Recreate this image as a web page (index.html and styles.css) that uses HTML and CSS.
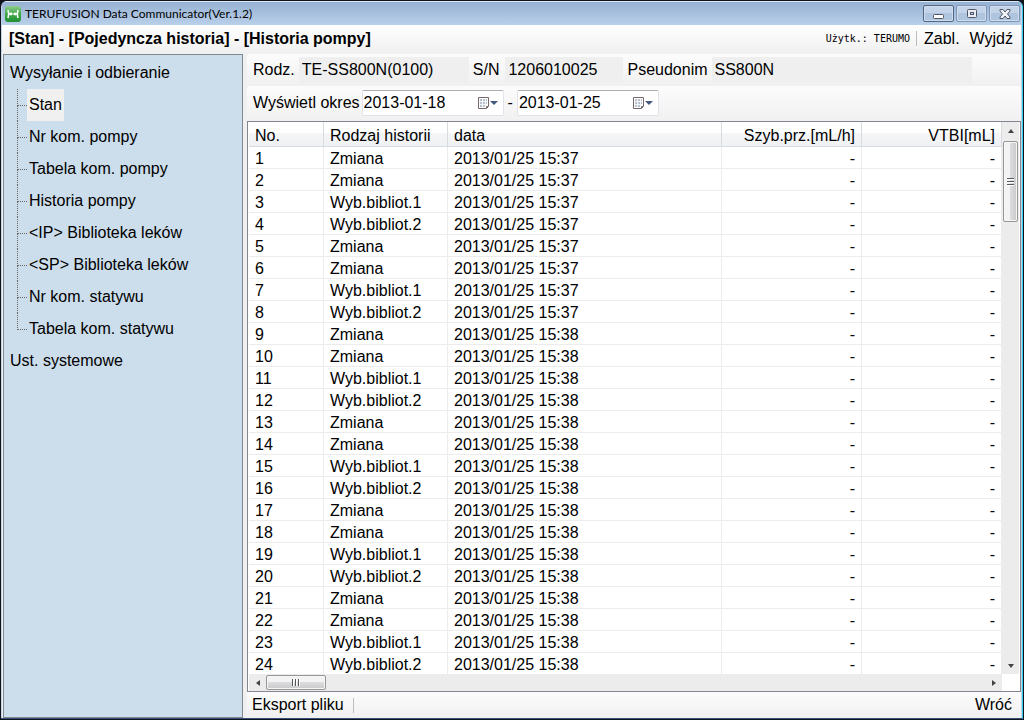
FILE: index.html
```html
<!DOCTYPE html>
<html lang="pl">
<head>
<meta charset="utf-8">
<title>TERUFUSION Data Communicator(Ver.1.2)</title>
<link rel="stylesheet" href="styles.css">
</head>
<body>
<div class="window">
  <header class="titlebar">
    <svg class="app-icon" viewBox="0 0 16 16" aria-hidden="true">
      <defs><linearGradient id="leaf" x1="0" y1="0" x2="0" y2="1"><stop offset="0" stop-color="#8fce8c"/><stop offset=".5" stop-color="#3fa848"/><stop offset="1" stop-color="#1f8f33"/></linearGradient></defs>
      <rect x="0" y="0" width="16" height="16" rx="3" fill="url(#leaf)"/>
      <g fill="none" stroke="#fff"><path d="M3 4Q4.500 8 3 12M13 4Q11.500 8 13 12" stroke-width="1.600"/><path d="M3.500 8H7M9 8H12.500" stroke-width="1.600"/><path d="M7 8H9" stroke-width=".8"/></g>
      <circle cx="6" cy="8" r="1.400" fill="#fff"/><circle cx="10" cy="8" r="1.400" fill="#fff"/>
    </svg>
    <h1 class="title">TERUFUSION Data Communicator(Ver.1.2)</h1>
    <div class="controls">
      <button class="control control-first" aria-label="Minimalizuj"><svg width="12" height="12" viewBox="0 0 12 12"><rect x=".5" y="6.500" width="10" height="4" rx="1" fill="#fff" stroke="#535666"/></svg></button>
      <button class="control" aria-label="Maksymalizuj"><svg width="12" height="12" viewBox="0 0 12 12"><rect x="1.500" y="1.500" width="9" height="8" rx="1" fill="#e9edf3" stroke="#535666"/><rect x="4.500" y="4.500" width="3" height="2" fill="#b9cce2" stroke="#535666"/></svg></button>
      <button class="control" aria-label="Zamknij"><svg width="12" height="12" viewBox="0 0 12 12"><path d="M1 1.500H4L6 4L8 1.500H11V3L8.500 6L11 9V10.500H8L6 8L4 10.500H1V9L3.500 6L1 3Z" fill="#eef1f5" stroke="#535666"/></svg></button>
    </div>
  </header>
  <div class="menubar">
    <h2 class="path">[Stan] - [Pojedyncza historia] - [Historia pompy]</h2>
    <span class="user">Użytk.: TERUMO</span>
    <span class="divider"></span>
    <button class="flat">Zabl.</button>
    <button class="flat">Wyjdź</button>
  </div>
  <div class="workspace">
    <nav class="sidebar">
      <a class="root" href="#odbieranie">Wysyłanie i odbieranie</a>
      <ul class="tree">
        <li><a class="node selected" href="#stan">Stan</a></li>
        <li><a class="node" href="#nr-pompy">Nr kom. pompy</a></li>
        <li><a class="node" href="#tabela-pompy">Tabela kom. pompy</a></li>
        <li><a class="node" href="#historia">Historia pompy</a></li>
        <li><a class="node" href="#ip">&lt;IP&gt; Biblioteka leków</a></li>
        <li><a class="node" href="#sp">&lt;SP&gt; Biblioteka leków</a></li>
        <li><a class="node" href="#nr-statywu">Nr kom. statywu</a></li>
        <li><a class="node" href="#tabela-statywu">Tabela kom. statywu</a></li>
      </ul>
      <a class="root" href="#ustawienia">Ust. systemowe</a>
    </nav>
    <main class="main">
      <div class="bar info">
        <label class="label" for="type">Rodz.</label>
        <input class="field field-type" id="type" value="TE-SS800N(0100)" readonly>
        <label class="label" for="serial">S/N</label>
        <input class="field field-serial" id="serial" value="1206010025" readonly>
        <label class="label" for="alias">Pseudonim</label>
        <input class="field field-alias" id="alias" value="SS800N" readonly>
      </div>
      <div class="bar period">
        <label class="label" for="from">Wyświetl okres</label>
        <div class="date">
          <input class="date-input" id="from" value="2013-01-18">
          <button class="date-button" aria-label="Wybierz datę początkową"><svg width="22" height="14" viewBox="0 0 22 14"><path d="M1.500 1.500H11.500V10.500L9.500 12.500H1.500Z" fill="#fff" stroke="#75686a"/><path d="M3 3H10V9H8V11H3Z" fill="#b9c1cf"/><path d="M3 5.500H10M3 8.500H10M5.500 3V11M8.500 3V10" stroke="#f3f5f8"/><path d="M9.500 12V10.500H11" fill="none" stroke="#75686a"/><path d="M13 5H21L17 9Z" fill="#44597f"/></svg></button>
        </div>
        <span class="dash">-</span>
        <div class="date">
          <input class="date-input" id="to" value="2013-01-25" aria-label="Data końcowa">
          <button class="date-button" aria-label="Wybierz datę końcową"><svg width="22" height="14" viewBox="0 0 22 14"><path d="M1.500 1.500H11.500V10.500L9.500 12.500H1.500Z" fill="#fff" stroke="#75686a"/><path d="M3 3H10V9H8V11H3Z" fill="#b9c1cf"/><path d="M3 5.500H10M3 8.500H10M5.500 3V11M8.500 3V10" stroke="#f3f5f8"/><path d="M9.500 12V10.500H11" fill="none" stroke="#75686a"/><path d="M13 5H21L17 9Z" fill="#44597f"/></svg></button>
        </div>
      </div>
      <section class="list">
        <div class="viewport">
          <table class="history">
            <colgroup><col class="col-no"><col class="col-type"><col><col class="col-value"><col class="col-value"></colgroup>
            <thead><tr><th>No.</th><th>Rodzaj historii</th><th>data</th><th class="num">Szyb.prz.[mL/h]</th><th class="num">VTBI[mL]</th></tr></thead>
            <tbody>
              <tr><td>1</td><td>Zmiana</td><td>2013/01/25 15:37</td><td class="num">-</td><td class="num">-</td></tr>
              <tr><td>2</td><td>Zmiana</td><td>2013/01/25 15:37</td><td class="num">-</td><td class="num">-</td></tr>
              <tr><td>3</td><td>Wyb.bibliot.1</td><td>2013/01/25 15:37</td><td class="num">-</td><td class="num">-</td></tr>
              <tr><td>4</td><td>Wyb.bibliot.2</td><td>2013/01/25 15:37</td><td class="num">-</td><td class="num">-</td></tr>
              <tr><td>5</td><td>Zmiana</td><td>2013/01/25 15:37</td><td class="num">-</td><td class="num">-</td></tr>
              <tr><td>6</td><td>Zmiana</td><td>2013/01/25 15:37</td><td class="num">-</td><td class="num">-</td></tr>
              <tr><td>7</td><td>Wyb.bibliot.1</td><td>2013/01/25 15:37</td><td class="num">-</td><td class="num">-</td></tr>
              <tr><td>8</td><td>Wyb.bibliot.2</td><td>2013/01/25 15:37</td><td class="num">-</td><td class="num">-</td></tr>
              <tr><td>9</td><td>Zmiana</td><td>2013/01/25 15:38</td><td class="num">-</td><td class="num">-</td></tr>
              <tr><td>10</td><td>Zmiana</td><td>2013/01/25 15:38</td><td class="num">-</td><td class="num">-</td></tr>
              <tr><td>11</td><td>Wyb.bibliot.1</td><td>2013/01/25 15:38</td><td class="num">-</td><td class="num">-</td></tr>
              <tr><td>12</td><td>Wyb.bibliot.2</td><td>2013/01/25 15:38</td><td class="num">-</td><td class="num">-</td></tr>
              <tr><td>13</td><td>Zmiana</td><td>2013/01/25 15:38</td><td class="num">-</td><td class="num">-</td></tr>
              <tr><td>14</td><td>Zmiana</td><td>2013/01/25 15:38</td><td class="num">-</td><td class="num">-</td></tr>
              <tr><td>15</td><td>Wyb.bibliot.1</td><td>2013/01/25 15:38</td><td class="num">-</td><td class="num">-</td></tr>
              <tr><td>16</td><td>Wyb.bibliot.2</td><td>2013/01/25 15:38</td><td class="num">-</td><td class="num">-</td></tr>
              <tr><td>17</td><td>Zmiana</td><td>2013/01/25 15:38</td><td class="num">-</td><td class="num">-</td></tr>
              <tr><td>18</td><td>Zmiana</td><td>2013/01/25 15:38</td><td class="num">-</td><td class="num">-</td></tr>
              <tr><td>19</td><td>Wyb.bibliot.1</td><td>2013/01/25 15:38</td><td class="num">-</td><td class="num">-</td></tr>
              <tr><td>20</td><td>Wyb.bibliot.2</td><td>2013/01/25 15:38</td><td class="num">-</td><td class="num">-</td></tr>
              <tr><td>21</td><td>Zmiana</td><td>2013/01/25 15:38</td><td class="num">-</td><td class="num">-</td></tr>
              <tr><td>22</td><td>Zmiana</td><td>2013/01/25 15:38</td><td class="num">-</td><td class="num">-</td></tr>
              <tr><td>23</td><td>Wyb.bibliot.1</td><td>2013/01/25 15:38</td><td class="num">-</td><td class="num">-</td></tr>
              <tr><td>24</td><td>Wyb.bibliot.2</td><td>2013/01/25 15:38</td><td class="num">-</td><td class="num">-</td></tr>
            </tbody>
          </table>
        </div>
        <div class="scroll vertical">
          <button class="arrow" aria-label="W górę"><svg width="8" height="8" viewBox="0 0 8 8"><path d="M1 6L4 2L7 6Z" fill="#444"/></svg></button>
          <div class="thumb"><svg width="8" height="8" viewBox="0 0 8 8"><path d="M0 .5H7M0 3.500H7M0 6.500H7" stroke="#55585c"/><path d="M0 1.500H7M0 4.500H7M0 7.500H7" stroke="#fff"/></svg></div>
          <button class="arrow arrow-end" aria-label="W dół"><svg width="8" height="8" viewBox="0 0 8 8"><path d="M1 2L4 6L7 2Z" fill="#444"/></svg></button>
        </div>
        <div class="scroll horizontal">
          <button class="arrow" aria-label="W lewo"><svg width="8" height="8" viewBox="0 0 8 8"><path d="M6 1L2 4L6 7Z" fill="#444"/></svg></button>
          <div class="thumb"><svg width="9" height="8" viewBox="0 0 9 8"><path d="M.5 0V7M3.500 0V7M6.500 0V7" stroke="#55585c"/><path d="M1.500 0V7M4.500 0V7M7.500 0V7" stroke="#fff"/></svg></div>
          <button class="arrow arrow-end" aria-label="W prawo"><svg width="8" height="8" viewBox="0 0 8 8"><path d="M2 1L6 4L2 7Z" fill="#444"/></svg></button>
        </div>
      </section>
      <footer class="footer">
        <button class="flat">Eksport pliku</button>
        <span class="divider"></span>
        <button class="flat back">Wróć</button>
      </footer>
    </main>
  </div>
</div>
</body>
</html>
```
FILE: styles.css
```css
* { box-sizing: border-box; }

body {
  margin: 0;
  height: 100vh;
  overflow: hidden;
  background: #10131a;
  color: #000;
  font: 16px/20px "Liberation Sans", Arial, sans-serif;
}

button, input {
  margin: 0;
  padding: 0;
  border: 0;
  border-radius: 0;
  background: none;
  color: inherit;
  font: inherit;
}

button svg { display: block; }

.window {
  display: flex;
  flex-direction: column;
  height: calc(100vh - 2px);
  margin: 1px;
  padding: 0 1px;
  border-radius: 6px 6px 0 0;
  border-right: 1px solid #35cdf0;
  border-bottom: 1px solid #35507a;
  background: #c3d5e9;
  overflow: hidden;
}

.titlebar {
  display: flex;
  align-items: center;
  height: 24px;
  flex: none;
  padding: 0 1px 0 3px;
  gap: 4px;
  border-top: 1px solid #dfe9f4;
  background: linear-gradient(#96b1d2, #b9d0ea);
}

.app-icon { width: 16px; height: 16px; }

.title {
  margin: 0;
  font: 12px/16px Lato, "Noto Sans", sans-serif;
}

.controls {
  display: flex;
  gap: 2px;
  margin-left: auto;
}

.control {
  display: flex;
  align-items: center;
  justify-content: center;
  width: 31px;
  height: 17px;
  border: 1px solid #8196b4;
  border-radius: 2px;
  background: linear-gradient(#c3d4e8 50%, #afc5df 50%);
  box-shadow: inset 0 0 0 1px #cfdeee;
}

.control-first { border-color: #536681; }

.menubar {
  display: flex;
  align-items: center;
  flex: none;
  height: 29px;
  padding: 0 8px 2px 7px;
  background: linear-gradient(#fff, #f0f0f0);
}

.path {
  margin: 0 auto 0 0;
  font-size: 16px;
  line-height: 20px;
}

.user { font: 10px/16px "DejaVu Sans Mono", monospace; }

.divider {
  width: 1px;
  height: 15px;
  margin: 0 7px;
  background: #bdbdbd;
}

.user + .divider { margin-left: 6px; }
.flat { white-space: nowrap; }
.flat + .flat { margin-left: 10px; }

.workspace {
  display: flex;
  flex: 1;
  min-height: 0;
  gap: 4px;
  padding: 0 0 0 1px;
  background: #f0f0f0;
}

.sidebar {
  flex: none;
  width: 240px;
  padding: 2px 6px;
  border: 1px solid #828790;
  background: #ccddeb;
}

.root, .node {
  color: inherit;
  line-height: 32px;
  text-decoration: none;
}

.root { display: block; }

.tree {
  margin: 0;
  padding: 0 0 0 7px;
  list-style: none;
}

.tree li {
  position: relative;
  height: 32px;
  padding-left: 10px;
}

.tree li::before {
  content: "";
  position: absolute;
  left: 0;
  top: 0;
  width: 9px;
  height: 16px;
  border-left: 1px dotted #666;
  border-bottom: 1px dotted #666;
}

.tree li:not(:last-child)::after {
  content: "";
  position: absolute;
  left: 0;
  top: 16px;
  height: 16px;
  border-left: 1px dotted #666;
}

.node {
  display: inline-block;
  padding: 0 2px;
}

.selected { background: #f0f0f0; }

.main {
  display: flex;
  flex-direction: column;
  flex: 1;
  min-width: 0;
}

.bar {
  display: flex;
  align-items: center;
  flex: none;
  padding-left: 6px;
  border-radius: 3px;
  background: linear-gradient(#fcfcfc, #f1f1f1);
}

.info { height: 31px; }
.period { height: 34px; margin: 1px 0; }
.label { white-space: nowrap; }

.field {
  height: 26px;
  padding: 0 3px;
  background: #efefef;
}

.field-type { width: 170px; margin: 0 4px; }
.field-serial { width: 118px; margin: 0 4px 0 6px; }
.field-alias { width: 260px; margin-left: 4px; }

.date {
  display: flex;
  align-items: center;
  width: 142px;
  height: 26px;
  padding: 0 4px 0 1px;
  border: 1px solid #e2e3ea;
  border-top-color: #abadb3;
  border-radius: 2px;
  background: #fff;
}

.label + .date { margin-left: 2px; }
.date-input { flex: 1; width: 100px; min-width: 0; }
.dash { padding: 0 4px; }

.list {
  display: grid;
  grid-template: minmax(0, 1fr) 17px / minmax(0, 1fr) 17px;
  flex: 1;
  min-height: 0;
  padding: 0 1px;
  border: 1px solid #828790;
  background: #fff;
}

.viewport { overflow: hidden; }

.history {
  width: 100%;
  border-collapse: separate;
  border-spacing: 0;
  table-layout: fixed;
}

.col-no { width: 75px; }
.col-type { width: 124px; }
.col-value { width: 140px; }

.history th, .history td {
  height: 22px;
  padding: 3px 6px 0;
  border-right: 1px solid #ececec;
  border-bottom: 1px solid #ececec;
  font-weight: normal;
  line-height: 18px;
  text-align: left;
  white-space: nowrap;
}

.history th {
  height: 25px;
  padding-top: 4px;
  border-color: #d8dbdf;
  background: linear-gradient(#fff 45%, #f5f6f8 45%, #f0f1f3);
}

.history .num { text-align: right; }

.scroll { display: flex; background: #ececec; }
.vertical { flex-direction: column; }

.arrow {
  display: flex;
  flex: none;
  align-items: center;
  justify-content: center;
  width: 17px;
  height: 17px;
}

.arrow-end { margin-left: auto; }
.vertical .arrow-end { margin: auto 0 0; }

.thumb {
  display: flex;
  align-items: center;
  justify-content: center;
  border: 1px solid #969696;
  border-radius: 2px;
  box-shadow: inset 0 0 0 1px #f6f6f6;
}

.vertical .thumb {
  height: 81px;
  margin: 2px 1px 0;
  background: linear-gradient(to right, #f3f3f3 45%, #dcdcde 50%, #c8c9cc);
}

.horizontal .thumb {
  width: 60px;
  margin: 1px 0;
  background: linear-gradient(#f3f3f3 45%, #dcdcde 50%, #c8c9cc);
}

.footer {
  display: flex;
  align-items: center;
  flex: none;
  height: 26px;
  padding: 0 9px 0 5px;
  background: linear-gradient(#fcfcfc, #f0f0f0);
}

.footer .divider { margin-left: 9px; }
.back { margin-left: auto; }
```
